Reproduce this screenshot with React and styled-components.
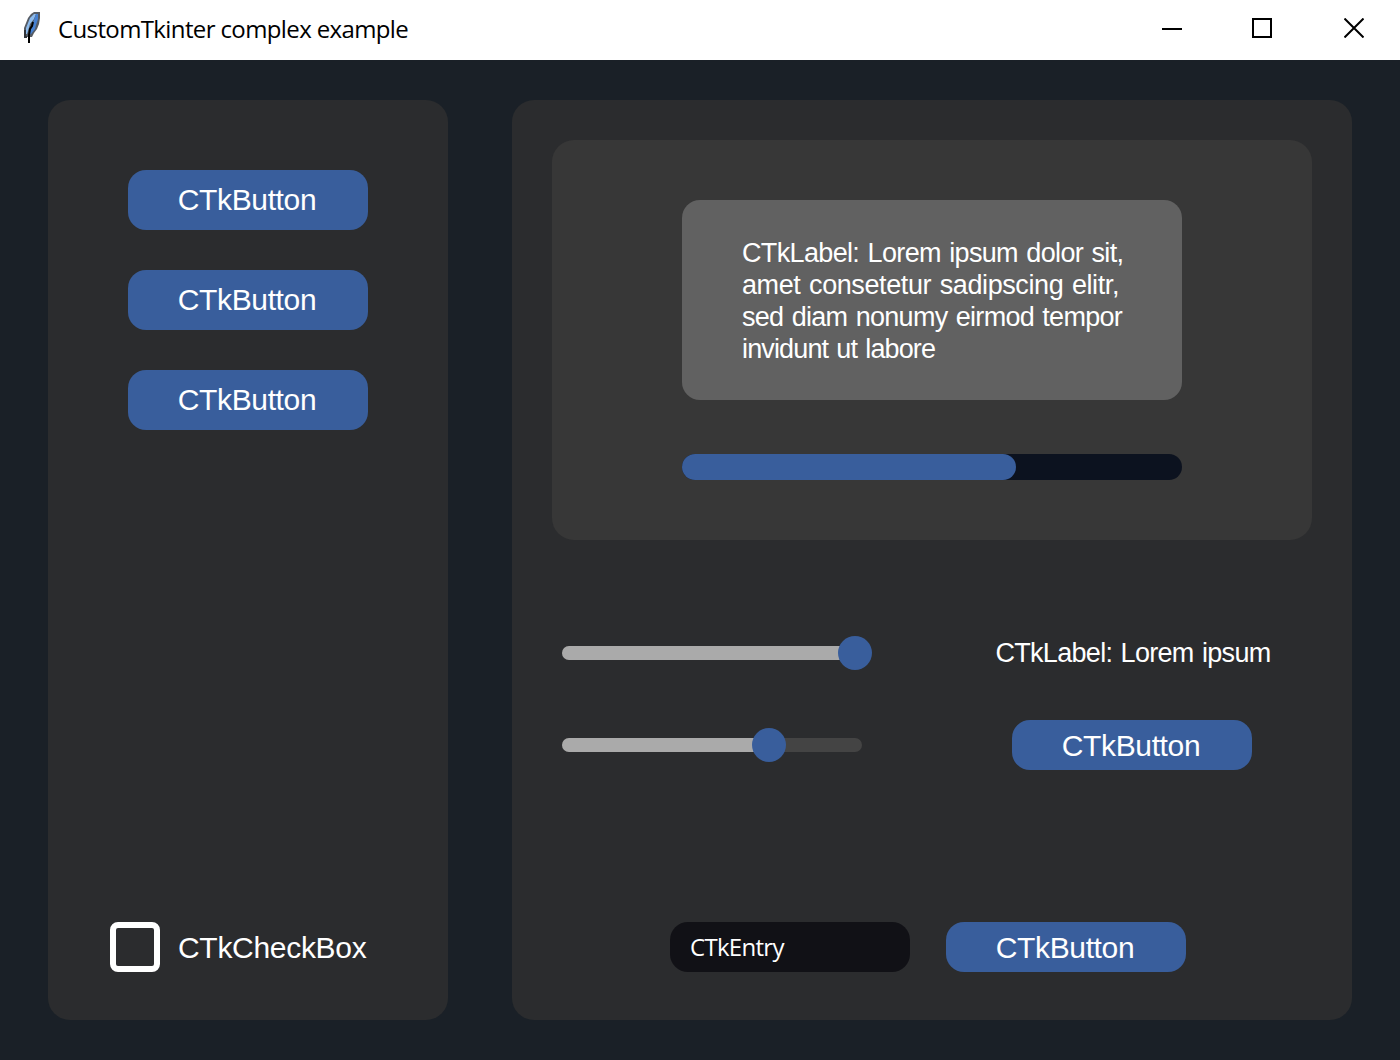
import React from 'react';
import styled, { createGlobalStyle } from 'styled-components';

const GlobalStyle = createGlobalStyle`
  * { box-sizing: border-box; }
  body { margin: 0; background: #1a2027; }
`;

const Window = styled.div`
  width: 1400px;
  height: 1060px;
  display: flex;
  flex-direction: column;
  overflow: hidden;
  background: #1a2027;
  color: #fff;
  font-family: "Liberation Sans", Arial, sans-serif;
`;

const TitleBar = styled.header`
  height: 60px;
  flex: none;
  display: flex;
  align-items: center;
  padding-left: 20px;
  background: #fff;
  color: #000;
`;

const FeatherIcon = styled.svg`
  width: 24px;
  height: 34px;
  margin: 0 14px 4px 0;
`;

const Title = styled.h1`
  flex: 1;
  margin: 0;
  padding-bottom: 3px;
  font: 400 24px/34px "Open Sans", "Noto Sans", sans-serif;
  letter-spacing: -0.62px;
`;

const WindowButtons = styled.div`
  display: flex;
  padding: 0 0 4px;
`;

const WindowButton = styled.button`
  width: 92px;
  height: 56px;
  padding: 0;
  border: 0;
  background: none;
  display: flex;
  align-items: center;
  justify-content: center;
`;

const MinimizeButton = styled(WindowButton)`
  padding-left: 4px;
`;

const Body = styled.main`
  flex: 1;
  display: grid;
  grid-template-columns: 400px 840px;
  column-gap: 64px;
  padding: 40px 48px;
`;

const Frame = styled.section`
  height: 920px;
  border-radius: 22px;
  background: #2b2c2e;
  display: flex;
  flex-direction: column;
`;

const Sidebar = styled(Frame)`
  align-items: center;
  gap: 40px;
  padding-top: 70px;
  padding-bottom: 48px;
`;

const Content = styled(Frame)`
  padding: 40px 40px 48px;
`;

const Button = styled.button`
  width: 240px;
  height: ${(p) => p.$height || 60}px;
  padding: ${(p) => (p.$height ? 2 : 0)}px 2px 0 0;
  border: 0;
  border-radius: 18px;
  background: #395e9c;
  color: #fff;
  font: 400 30px/34px "Liberation Sans", Arial, sans-serif;
  letter-spacing: -0.35px;
`;

const CheckRow = styled.label`
  width: 276px;
  height: 50px;
  margin-top: auto;
  display: flex;
  align-items: center;
  gap: 18px;
  font-size: 30px;
  line-height: 34px;
  letter-spacing: -0.3px;
  white-space: nowrap;
`;

const CheckBox = styled.span`
  flex: none;
  width: 50px;
  height: 50px;
  border: 6px solid #fff;
  border-radius: 8px;
`;

const CheckText = styled.span`
  padding-top: 1px;
`;

const InfoPanel = styled.section`
  height: 400px;
  flex: none;
  padding-top: 60px;
  border-radius: 22px;
  background: #373737;
  display: flex;
  flex-direction: column;
  align-items: center;
  gap: 54px;
`;

const TextCard = styled.div`
  width: 500px;
  height: 200px;
  padding: 37px 0 0 60px;
  border-radius: 18px;
  background: #616161;
`;

const Label = styled.p`
  margin: 0;
  font-size: 27px;
  line-height: 32px;
  letter-spacing: ${(p) => p.$spacing || 0}px;
  word-spacing: 1.5px;
  white-space: nowrap;
`;

const Progress = styled.div`
  width: 500px;
  height: 26px;
  border-radius: 13px;
  background: #0c121f;
`;

const ProgressFill = styled.div`
  height: 26px;
  border-radius: 13px;
  background: #395e9c;
`;

const Controls = styled.div`
  margin-top: 88px;
  display: grid;
  grid-template-columns: 310px 280px;
  grid-template-rows: 50px 50px;
  row-gap: 42px;
  justify-content: space-between;
  align-items: center;
  padding: 0 40px 0 10px;
`;

const ActionCell = styled.div`
  display: flex;
  justify-content: center;
  padding-left: ${(p) => p.$indent || 0}px;
`;

const Slider = styled.div`
  height: 34px;
  display: flex;
  align-items: center;
`;

const SliderTrack = styled.div`
  width: 300px;
  height: 14px;
  border-radius: 7px;
  background: #444;
  display: flex;
  align-items: center;
`;

const SliderFill = styled.div`
  flex: none;
  height: 14px;
  border-radius: 7px 0 0 7px;
  background: #aaa;
`;

const SliderKnob = styled.div`
  flex: none;
  width: 34px;
  height: 34px;
  margin-left: -6px;
  border-radius: 50%;
  background: #395e9c;
`;

const Footer = styled.div`
  margin-top: auto;
  display: flex;
  gap: 36px;
  padding-left: 118px;
`;

const Entry = styled.div`
  width: 240px;
  height: 50px;
  padding: 0 20px;
  border-radius: 18px;
  background: #111116;
  font: 400 24px/50px "Open Sans", "Noto Sans", sans-serif;
  letter-spacing: -0.7px;
`;

const LINES = [
  ['CTkLabel: Lorem ipsum dolor sit,', -0.65],
  ['amet consetetur sadipscing elitr,', -0.4],
  ['sed diam nonumy eirmod tempor', -0.71],
  ['invidunt ut labore', -0.86],
];

function SliderControl({ fill }) {
  return (
    <Slider>
      <SliderTrack>
        <SliderFill style={{ width: fill }} />
        <SliderKnob />
      </SliderTrack>
    </Slider>
  );
}

function Feather() {
  return (
    <FeatherIcon viewBox="0 0 24 34" aria-hidden="true">
      <path d="M14 1H20V7L19 13L17 18L14 22L12 26H5L4 22V17L6 12L8 7L11 3Z" fill="#555b64" />
      <path d="M14 3H16L14 8L10 13L8 20L7 23H6V17L8 12L10 7Z" fill="#8dbbed" />
      <path d="M16 3H18V8L16 14L15 18L11 23L9 24L10 18L13 12Z" fill="#4681d2" />
      <path d="M13 11L12 15L10 18L9 24V32" fill="none" stroke="#000" strokeWidth="2" />
      <path d="M5 19V26H7" fill="none" stroke="#30343a" strokeWidth="2" />
    </FeatherIcon>
  );
}

export default function App() {
  return (
    <Window>
      <GlobalStyle />
      <TitleBar>
        <Feather />
        <Title>CustomTkinter complex example</Title>
        <WindowButtons>
          <MinimizeButton aria-label="Minimize">
            <svg width="20" height="20"><path d="M0 11H20" stroke="#000" strokeWidth="2" /></svg>
          </MinimizeButton>
          <WindowButton aria-label="Maximize">
            <svg width="20" height="20"><path d="M1 1H19V19H1Z" fill="none" stroke="#000" strokeWidth="2" /></svg>
          </WindowButton>
          <WindowButton aria-label="Close">
            <svg width="20" height="20"><path d="M.5 .5L19.5 19.5M19.5 .5L.5 19.5" stroke="#000" strokeWidth="2" /></svg>
          </WindowButton>
        </WindowButtons>
      </TitleBar>
      <Body>
        <Sidebar>
          <Button>CTkButton</Button>
          <Button>CTkButton</Button>
          <Button>CTkButton</Button>
          <CheckRow><CheckBox /><CheckText>CTkCheckBox</CheckText></CheckRow>
        </Sidebar>
        <Content>
          <InfoPanel>
            <TextCard>
              {LINES.map(([text, spacing]) => <Label key={text} $spacing={spacing}>{text}</Label>)}
            </TextCard>
            <Progress><ProgressFill style={{ width: 334 }} /></Progress>
          </InfoPanel>
          <Controls>
            <SliderControl fill={282} />
            <ActionCell $indent={2}><Label $spacing={-0.69}>CTkLabel: Lorem ipsum</Label></ActionCell>
            <SliderControl fill={196} />
            <ActionCell><Button $height={50}>CTkButton</Button></ActionCell>
          </Controls>
          <Footer>
            <Entry>CTkEntry</Entry>
            <Button $height={50}>CTkButton</Button>
          </Footer>
        </Content>
      </Body>
    </Window>
  );
}
